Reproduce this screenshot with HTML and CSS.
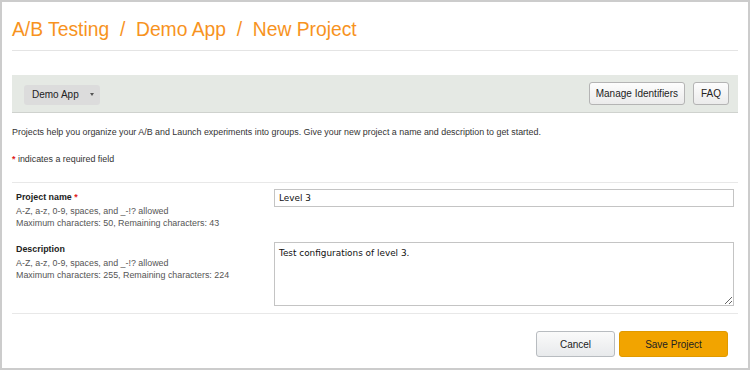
FILE: index.html
```html
<!DOCTYPE html>
<html lang="en">
<head>
    <meta charset="UTF-8">
    <title>New Project</title>
    <link rel="stylesheet" href="styles.css">
</head>
<body>

    <div class="page">

        <!-- Breadcrumb title -->
        <h1 class="title">A/B Testing &nbsp;/&nbsp; Demo App &nbsp;/&nbsp; New Project</h1>

        <!-- Toolbar -->
        <div class="toolbar">
            <button class="app-select">Demo App <span class="caret"></span></button>
            <div class="toolbar-right">
                <button class="btn">Manage Identifiers</button>
                <button class="btn btn-faq">FAQ</button>
            </div>
        </div>

        <!-- Intro -->
        <div class="intro">
            <p>Projects help you organize your A/B and Launch experiments into groups. Give your new project a name and description to get started.</p>
            <p class="required-note"><span class="req">*</span> indicates a required field</p>
        </div>

        <!-- Form -->
        <form class="project-form">
            <div class="form-row">
                <div class="field-info">
                    <label class="field-label">Project name <span class="req">*</span></label>
                    <div class="hint">A-Z, a-z, 0-9, spaces, and _-!? allowed</div>
                    <div class="hint">Maximum characters: 50, Remaining characters: 43</div>
                </div>
                <input type="text" class="text-input" value="Level 3">
            </div>
            <div class="form-row second">
                <div class="field-info">
                    <label class="field-label">Description</label>
                    <div class="hint">A-Z, a-z, 0-9, spaces, and _-!? allowed</div>
                    <div class="hint">Maximum characters: 255, Remaining characters: 224</div>
                </div>
                <textarea class="text-area">Test configurations of level 3.</textarea>
            </div>

            <div class="form-actions">
                <button type="button" class="btn btn-cancel">Cancel</button>
                <button type="button" class="btn btn-save">Save Project</button>
            </div>
        </form>

    </div>

</body>
</html>
```

FILE: styles.css
```css
/* General */
body {
    margin: 0;
    font-family: "Liberation Sans", Arial, sans-serif;
    background: #fff;
    color: #222;
}

.page {
    height: 370px;
    box-sizing: border-box;
    border: 2px solid #cccccc;
    padding: 0 10px;
    overflow: hidden;
}

/* Title */
.title {
    margin: 0;
    padding: 16px 0 8px;
    font-size: 19.3px;
    line-height: 24px;
    font-weight: normal;
    color: #f7931e;
    border-bottom: 1px solid #e4e4e4;
}

/* Toolbar */
.toolbar {
    margin-top: 24px;
    height: 38px;
    box-sizing: border-box;
    padding: 0 9px 0 12px;
    background: #e5e9e4;
    border-bottom: 1px solid #cfd2ce;
    display: flex;
    align-items: center;
    justify-content: space-between;
}

.toolbar-right {
    display: flex;
    gap: 8px;
}

button {
    font-family: "Liberation Sans", Arial, sans-serif;
    cursor: pointer;
}

.app-select {
    width: 76px;
    height: 20px;
    padding: 0 0 0 8px;
    margin-top: 2px;
    border: none;
    border-radius: 3px;
    background: #dcdcdc;
    font-size: 10px;
    color: #222;
    text-align: left;
    display: flex;
    align-items: center;
}

.caret {
    margin-left: 11px;
    width: 0;
    height: 0;
    border-left: 2.5px solid transparent;
    border-right: 2.5px solid transparent;
    border-top: 3px solid #555;
}

.btn {
    height: 23px;
    padding: 0 6px;
    border: 1px solid #b4b4b4;
    border-radius: 3px;
    background: linear-gradient(#fdfdfd, #ebebeb);
    font-size: 10px;
    color: #222;
}

.btn-faq {
    width: 36px;
    padding: 0;
}

/* Intro */
.intro {
    padding: 13px 0 17px;
    border-bottom: 1px solid #e8e8e8;
    font-size: 8.9px;
    line-height: 12px;
    color: #333;
}

.intro p {
    margin: 0;
}

.intro .required-note {
    margin-top: 15px;
}

.req {
    color: #e0201b;
    font-weight: bold;
}

/* Form */
.form-row {
    display: flex;
    padding: 6px 4px 0;
}

.form-row.second {
    padding-top: 13px;
    padding-bottom: 7px;
}

.field-info {
    width: 258px;
    font-size: 8.9px;
    line-height: 12px;
    padding-top: 2px;
}

.form-row.second .field-info {
    padding-top: 1px;
}

.field-label {
    display: block;
    font-weight: bold;
    color: #222;
    margin-bottom: 2px;
}

.hint {
    color: #555;
}

.text-input,
.text-area {
    flex: 1;
    box-sizing: border-box;
    border: 1px solid #c4c4c4;
    font-family: "DejaVu Sans", Verdana, sans-serif;
    font-size: 8.9px;
    color: #111;
    padding: 0 4px;
    margin: 0;
    outline: none;
}

.text-input {
    height: 18px;
}

.text-area {
    height: 64px;
    padding: 5px 4px;
    resize: both;
}

/* Footer actions */
.form-actions {
    border-top: 1px solid #e8e8e8;
    padding: 17px 10px 0 0;
    display: flex;
    justify-content: flex-end;
    gap: 4px;
}

.btn-cancel {
    width: 79px;
    height: 26px;
    font-size: 10px;
    border-color: #b8bcc0;
    background: linear-gradient(#fafafa, #e8eaec);
    color: #222;
}

.btn-save {
    width: 109px;
    height: 26px;
    font-size: 10px;
    border: 1px solid #e09a00;
    background: #f2a400;
    color: #222;
}
```
